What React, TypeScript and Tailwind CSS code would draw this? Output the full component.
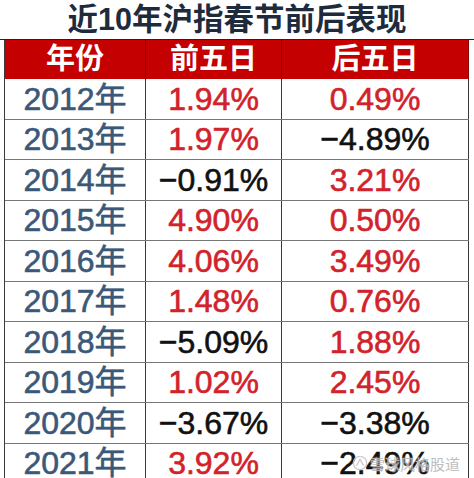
const rows: [string, string, string][] = [
  ["2012年", "1.94%", "0.49%"],
  ["2013年", "1.97%", "−4.89%"],
  ["2014年", "−0.91%", "3.21%"],
  ["2015年", "4.90%", "0.50%"],
  ["2016年", "4.06%", "3.49%"],
  ["2017年", "1.48%", "0.76%"],
  ["2018年", "−5.09%", "1.88%"],
  ["2019年", "1.02%", "2.45%"],
  ["2020年", "−3.67%", "−3.38%"],
  ["2021年", "3.92%", "−2.49%"],
];

const font = { fontFamily: '"Liberation Sans", "Noto Sans CJK SC", sans-serif' };

function Value({ v }: { v: string }) {
  const neg = v.startsWith("−");
  return (
    <div
      className={`flex items-center justify-center border-r border-[#3a3a3a] text-[32px] leading-none [-webkit-text-stroke:0.6px_currentColor] ${
        neg ? "text-[#111111]" : "text-[#d2222b]"
      }`}
    >
      {v}
    </div>
  );
}

export default function App() {
  return (
    <div className="relative h-[478px] w-[474px] overflow-hidden bg-white" style={font}>
      {/* 标题 */}
      <div className="flex h-[40px] items-center justify-center border-b border-[#7a0000]">
        <h1 className="text-[30.5px] font-bold leading-none text-[#1e2b3d]">近10年沪指春节前后表现</h1>
      </div>

      <div className="ml-[4px] w-[465px] border-l border-[#3a3a3a]">
        {/* 表头 */}
        <div className="grid h-[39px] grid-cols-[141px_136px_187px] bg-[#c40000] text-[29px] font-bold leading-none text-white">
          <div className="flex items-center justify-center border-r border-[#8a0000]">年份</div>
          <div className="flex items-center justify-center border-r border-[#8a0000]">前五日</div>
          <div className="flex items-center justify-center border-r border-[#8a0000]">后五日</div>
        </div>

        {rows.map(([year, before, after]) => (
          <div
            key={year}
            className="grid h-[40.5px] grid-cols-[141px_136px_187px] border-b border-[#777777]"
          >
            <div className="flex items-center justify-center border-r border-[#3a3a3a] text-[32px] leading-none text-[#3c5878] [-webkit-text-stroke:0.6px_currentColor]">
              {year}
            </div>
            <Value v={before} />
            <Value v={after} />
          </div>
        ))}
      </div>

      {/* 水印 */}
      <div className="absolute left-[352px] top-[455px] flex items-center gap-[2px] text-[15px] leading-none text-[#b8b8b8] opacity-90">
        <svg width="16" height="16" viewBox="0 0 18 18">
          <circle cx="9" cy="9" r="7.5" fill="none" stroke="#c8c8c8" strokeWidth="1.5" />
          <path d="M5 12 L9 5 L13 12" fill="none" stroke="#c8c8c8" strokeWidth="1.5" />
        </svg>
        <span style={{ fontFamily: '"Noto Sans CJK SC", sans-serif', textShadow: "0 0 2px #fff" }}>雪球风格股道</span>
      </div>
    </div>
  );
}
